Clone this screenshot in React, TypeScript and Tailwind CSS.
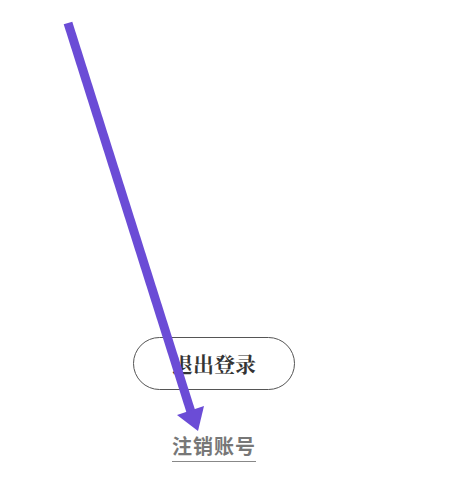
export default function App() {
  return (
    <div className="relative h-[485px] w-[453px] overflow-hidden bg-white">
      <div className="flex w-[428px] flex-col items-center pt-[337px]">
        <button className="flex h-[53px] w-[162px] items-center justify-center rounded-full border-[1.5px] border-[#555] text-[21px] font-bold text-[#333] [font-family:'Noto_Serif_CJK_SC','Noto_Sans_CJK_SC',serif]">
          退出登录
        </button>
        <span className="mt-[44px] border-b border-[#888] pb-[3px] text-[20px] font-bold leading-[24px] tracking-[1px] text-[#777] [font-family:'Noto_Sans_CJK_SC',sans-serif]">
          注销账号
        </span>
      </div>
      <svg className="pointer-events-none absolute inset-0" width="453" height="485" viewBox="0 0 453 485">
        <line x1="68" y1="23" x2="191" y2="412" stroke="#6b4cd6" strokeWidth="9" />
        <polygon points="177,415 204,406 198,431" fill="#6b4cd6" />
      </svg>
    </div>
  );
}
